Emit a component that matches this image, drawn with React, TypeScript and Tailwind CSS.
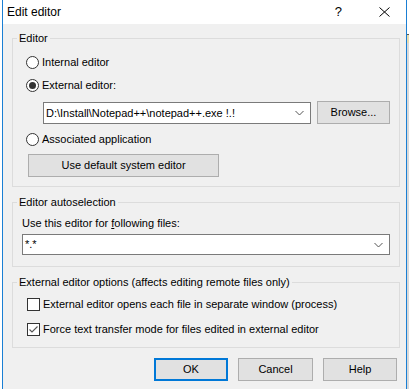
import React from "react";

function Radio({ checked, label }: { checked?: boolean; label: string }) {
  return (
    <div className="flex items-center h-[16px]">
      <div className="w-[13px] h-[13px] rounded-full border border-[#333333] bg-white flex items-center justify-center">
        {checked && <div className="w-[7px] h-[7px] rounded-full bg-[#333333]" />}
      </div>
      <span className="ml-[3px] leading-[16px]">{label}</span>
    </div>
  );
}

function Check({ checked, label }: { checked?: boolean; label: string }) {
  return (
    <div className="flex items-center h-[16px]">
      <div className="w-[13px] h-[13px] border border-[#333333] bg-white flex items-center justify-center">
        {checked && (
          <svg width="11" height="11" viewBox="0 0 11 11">
            <path d="M1.5 5.5 L4 8 L9.5 2.5" fill="none" stroke="#555555" strokeWidth="1.1" />
          </svg>
        )}
      </div>
      <span className="ml-[3px] leading-[16px]">{label}</span>
    </div>
  );
}

function Chevron() {
  return (
    <svg width="9" height="6" viewBox="0 0 9 6">
      <path d="M0.5 1 L4.5 5 L8.5 1" fill="none" stroke="#555555" strokeWidth="1" />
    </svg>
  );
}

function Btn({ label, w, primary }: { label: string; w: string; primary?: boolean }) {
  return (
    <div
      className={
        "h-[23px] bg-[#e1e1e1] flex items-center justify-center " +
        w +
        (primary ? " border-2 border-[#0078d7]" : " border border-[#adadad]")
      }
    >
      {label}
    </div>
  );
}

export default function App() {
  return (
    <div className="w-[409px] h-[389px] flex bg-white overflow-hidden text-[11px] text-black font-['Liberation_Sans',Arial,sans-serif]">
      <div className="w-[2px] bg-white" />
      <div className="w-[405px] border-x border-[#1a7fd4] flex flex-col">
        <div className="h-[24px] bg-white flex items-center pl-[4px] relative">
          <span className="text-[12px] leading-[16px]">Edit editor</span>
          <span className="ml-auto text-[13px] leading-[16px] mr-[37px]">?</span>
          <svg width="11" height="10" viewBox="0 0 11 10" className="mr-[16px]">
            <path d="M0.5 0.5 L10.5 9.5 M10.5 0.5 L0.5 9.5" stroke="#000" strokeWidth="1" fill="none" />
          </svg>
        </div>
        <div className="flex-1 bg-[#f0f0f0] flex flex-col">
          <fieldset className="mt-[7px] ml-[9px] mr-[6px] border border-[#dcdcdc]">
            <legend className="ml-[4px] px-[2px] leading-[14px]">Editor</legend>
            <div className="pl-[13px] pr-[9px] pt-[9px] pb-[9px] flex flex-col">
              <Radio label="Internal editor" />
              <div className="mt-[7px]">
                <Radio checked label="External editor:" />
              </div>
              <div className="mt-[8px] flex items-start">
                <div className="ml-[17px] mt-[1px] w-[268px] h-[22px] border border-[#7a7a7a] bg-white flex items-center justify-between pl-[2px] pr-[6px]">
                  <span>D:\Install\Notepad++\notepad++.exe !.!</span>
                  <Chevron />
                </div>
                <div className="ml-auto">
                  <Btn label="Browse..." w="w-[73px]" />
                </div>
              </div>
              <div className="mt-[7px]">
                <Radio label="Associated application" />
              </div>
              <div className="mt-[7px] ml-[2px]">
                <Btn label="Use default system editor" w="w-[191px]" />
              </div>
            </div>
          </fieldset>
          <fieldset className="mt-[8px] ml-[9px] mr-[6px] border border-[#dcdcdc]">
            <legend className="ml-[4px] px-[2px] leading-[14px]">Editor autoselection</legend>
            <div className="pl-[9px] pr-[9px] pt-[6px] pb-[11px] flex flex-col">
              <div className="h-[16px] leading-[16px]">
                Use this editor for <u>f</u>ollowing files:
              </div>
              <div className="mt-[3px] h-[21px] border border-[#7a7a7a] bg-white flex items-center justify-between pl-[2px] pr-[6px]">
                <span>*.*</span>
                <Chevron />
              </div>
            </div>
          </fieldset>
          <fieldset className="mt-[8px] ml-[9px] mr-[6px] border border-[#dcdcdc]">
            <legend className="ml-[4px] px-[2px] leading-[14px]">
              External editor options (affects editing remote files only)
            </legend>
            <div className="pl-[14px] pr-[9px] pt-[7px] pb-[10px] flex flex-col">
              <Check label="External editor opens each file in separate window (process)" />
              <div className="mt-[9px]">
                <Check checked label="Force text transfer mode for files edited in external editor" />
              </div>
            </div>
          </fieldset>
          <div className="mt-[10px] flex justify-end gap-[10px] pr-[9px]">
            <Btn label="OK" w="w-[74px]" primary />
            <Btn label="Cancel" w="w-[75px]" />
            <Btn label="Help" w="w-[74px]" />
          </div>
        </div>
      </div>
      <div className="w-[2px] flex flex-col">
        <div className="h-[34px] bg-white" />
        <div className="h-[1px] bg-[#555555]" />
        <div className="h-[8px] bg-[#e8dcb0]" />
        <div className="flex-1 bg-[#d9d9d9]" />
      </div>
    </div>
  );
}
